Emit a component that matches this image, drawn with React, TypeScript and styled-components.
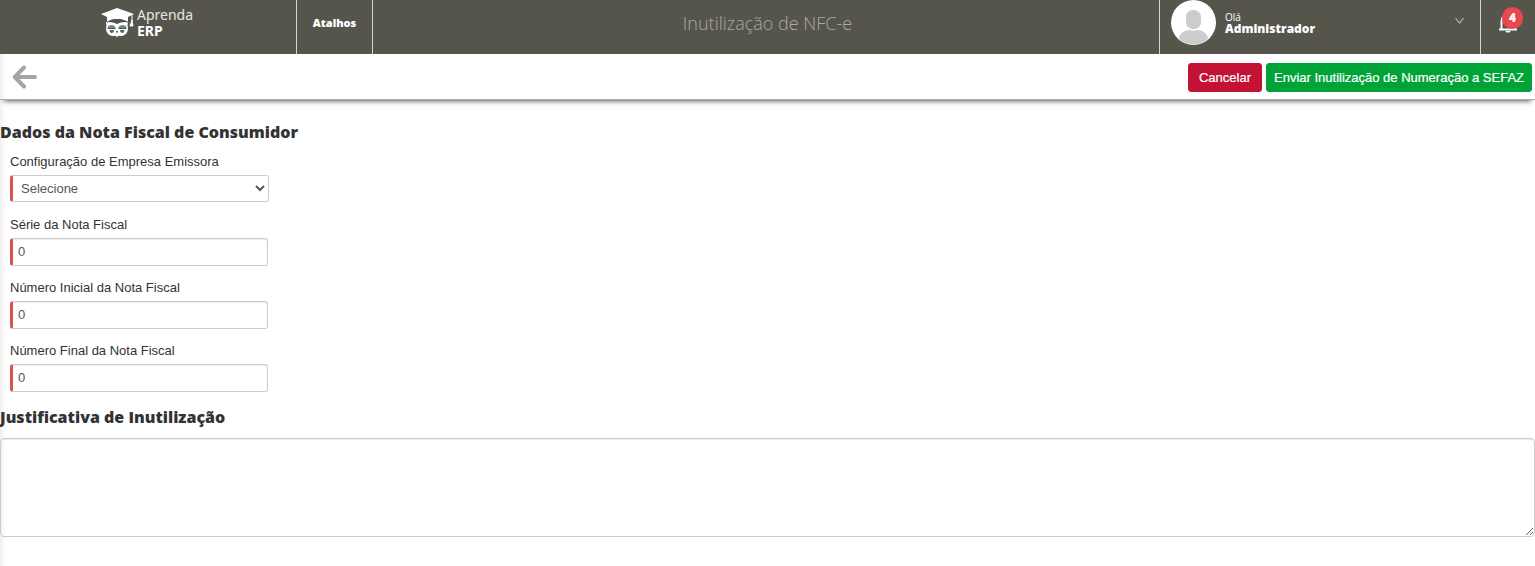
import React from "react";
import styled, { createGlobalStyle } from "styled-components";

const sans = `"Liberation Sans", Arial, sans-serif`;
const display = `"Open Sans", "Noto Sans", sans-serif`;

const GlobalStyle = createGlobalStyle`
  *, *::before, *::after { box-sizing: border-box; }
  body {
    margin: 0;
    background: #fff;
    color: #333;
    font-family: ${sans};
    font-size: 13px;
    line-height: 18px;
  }
`;

const Header = styled.header`
  display: flex;
  height: 54px;
  background: #56554c;
  color: #fff;
  font-family: ${display};
`;

const Brand = styled.a`
  display: flex;
  flex: 0 0 297px;
  gap: 2px;
  padding: 7px 0 0 101px;
  border-right: 1px solid #d5d5d0;
  color: #fff;
  text-decoration: none;
`;

const BrandName = styled.span`
  display: flex;
  flex-direction: column;
  font-family: "Noto Sans", sans-serif;
  font-size: 14px;
  line-height: 16px;
  color: #e6e6e2;

  strong {
    color: #fff;
  }
`;

const Shortcuts = styled.button`
  flex: 0 0 76px;
  padding: 0 0 10px;
  border: 0;
  border-right: 1px solid #d5d5d0;
  background: transparent;
  color: #fff;
  font-family: ${display};
  font-size: 11px;
  font-weight: 800;
`;

const PageTitle = styled.h1`
  flex: 1;
  margin: 0;
  padding: 11px 0 0 3px;
  color: #aaa9a3;
  font-size: 18px;
  font-weight: 300;
  line-height: 24px;
  text-align: center;
`;

const UserMenu = styled.button`
  display: flex;
  flex: 0 0 321px;
  align-items: flex-start;
  gap: 9px;
  padding: 0 15px 0 11px;
  border: 0;
  border-left: 1px solid #d5d5d0;
  background: transparent;
  color: #fff;
  font-family: ${display};
  font-size: 10px;
  line-height: 11px;
  text-align: left;
`;

const UserName = styled.span`
  display: flex;
  flex: 1;
  flex-direction: column;
  padding-top: 12px;

  strong {
    font-size: 12px;
    font-weight: 800;
  }
`;

const Chevron = styled.svg`
  margin-top: 16px;
`;

const Notifications = styled.button`
  position: relative;
  display: flex;
  flex: 0 0 55px;
  align-items: flex-start;
  padding: 12px 0 0 17px;
  border: 0;
  border-left: 1px solid #d5d5d0;
  background: transparent;
  color: #fff;
`;

const Badge = styled.span`
  position: absolute;
  top: 7px;
  right: 12px;
  width: 21px;
  height: 22px;
  border-radius: 11px;
  background: #e9484d;
  font-family: ${display};
  font-size: 12px;
  font-weight: 800;
  line-height: 22px;
  text-align: center;
`;

const Page = styled.main`
  min-height: calc(100vh - 54px);
  background: linear-gradient(to right, #f1f1f1, #fff 6px);
`;

const Toolbar = styled.div`
  display: flex;
  align-items: center;
  gap: 4px;
  height: 46px;
  padding: 1px 3px 0 12px;
  border-bottom: 1px solid #aaa;
  box-shadow: 0 5px 5px -4px #555;
`;

const BackButton = styled.button`
  margin-right: auto;
  padding: 0;
  border: 0;
  background: transparent;

  svg {
    display: block;
  }
`;

const ActionButton = styled.button<{ $color: string }>`
  min-width: 74px;
  height: 29px;
  padding: 0 7px;
  border: 1px solid ${({ $color }) => $color};
  border-radius: 3px;
  background: ${({ $color }) => $color};
  color: #fff;
  font-family: ${sans};
  font-size: 13px;
  -webkit-text-stroke: 0.2px #fff;
`;

const SectionTitle = styled.h2`
  margin: 0;
  color: #333;
  font-family: ${display};
  font-size: 16px;
  font-weight: 800;
  line-height: 22px;
`;

const Form = styled.form`
  padding-top: 21px;
`;

const Fields = styled.div`
  display: flex;
  flex-direction: column;
  gap: 13px;
  padding: 10px 10px 14px;
`;

const Field = styled.div`
  display: flex;
  flex-direction: column;
  align-items: flex-start;
  gap: 5px;
`;

const Label = styled.label`
  font-size: 13px;
  line-height: 17px;
`;

const Input = styled.input`
  width: 258px;
  height: 28px;
  padding: 0 5px 2px;
  border: 1px solid #ccc;
  border-left: 3px solid #d9534f;
  border-radius: 3px;
  background: #fff;
  box-shadow: inset 0 1px 1px rgba(0, 0, 0, 0.08);
  color: #555;
  font-family: ${sans};
  font-size: 13px;
`;

const Select = styled.select`
  width: 259px;
  height: 27px;
  margin-bottom: 1px;
  padding: 0 0 0 4px;
  border: 1px solid #ccc;
  border-left: 3px solid #d9534f;
  border-radius: 3px;
  background: #fff;
  color: #555;
  font-family: ${sans};
  font-size: 13px;
`;

const TextArea = styled.textarea`
  display: block;
  width: 100%;
  height: 99px;
  margin-top: 10px;
  padding: 6px 8px;
  border: 1px solid #ccc;
  border-radius: 4px;
  background: transparent;
  box-shadow: inset 0 1px 1px rgba(0, 0, 0, 0.08);
  color: #555;
  font-family: ${sans};
  font-size: 13px;
`;

const numberFields = [
  { id: "serie", label: "Série da Nota Fiscal" },
  { id: "numero-inicial", label: "Número Inicial da Nota Fiscal" },
  { id: "numero-final", label: "Número Final da Nota Fiscal" },
];

function OwlLogo() {
  return (
    <svg width="34" height="31" viewBox="0 0 34 31" aria-hidden="true">
      <path
        d="M5 15c3 0 7 0 11 2 4-2 8-2 11-2 0 2-1 3 0 6 0 4-2 7-6 8-2 0-3-1-5 1-2-2-3-1-5-1-4-1-6-4-6-8 1-3 0-4 0-6z"
        fill="#fff"
      />
      <path d="M6.500 21c0-4 8-4 8 0zM17.500 21c0-4 8-4 8 0z" fill="#75878a" />
      <path d="M6.500 21.500h8M17.500 21.500h8" stroke="#45534f" strokeWidth="1" />
      <path d="M8.500 23c0 4 4.500 4 4.500 0zM19 23c0 4 4.500 4 4.500 0z" fill="#56655f" />
      <path d="M15 24h2l-1 3z" fill="#56554c" />
      <path d="M0 7 16 1l17 6-6 3v5c-6-4-16-4-21 0v-5z" fill="#fff" />
      <path d="M6 15.500c5-4 15-4 21 0" fill="none" stroke="#56554c" strokeWidth="1" />
      <path d="M31 7v7M31 13l-2 6h3z" fill="#fff" stroke="#fff" strokeWidth="1" />
    </svg>
  );
}

function Avatar() {
  return (
    <svg width="45" height="45" viewBox="0 0 45 45" aria-hidden="true">
      <defs>
        <clipPath id="avatar-disc">
          <circle cx="22.500" cy="22.500" r="22" />
        </clipPath>
      </defs>
      <circle cx="22.500" cy="22.500" r="22.500" fill="#fff" />
      <g clipPath="url(#avatar-disc)" fill="#ccc">
        <rect x="15" y="10" width="15" height="19" rx="7" />
        <path d="M8 45v-6c0-5 5-9 11-9 2 1 5 1 7 0 6 0 11 4 11 9v6z" />
      </g>
    </svg>
  );
}

export default function App() {
  return (
    <>
      <GlobalStyle />
      <Header>
        <Brand href="#">
          <OwlLogo />
          <BrandName>
            <span>Aprenda</span>
            <strong>ERP</strong>
          </BrandName>
        </Brand>
        <Shortcuts type="button">Atalhos</Shortcuts>
        <PageTitle>Inutilização de NFC-e</PageTitle>
        <UserMenu type="button">
          <Avatar />
          <UserName>
            <span>Olá</span>
            <strong>Administrador</strong>
          </UserName>
          <Chevron width="11" height="10" viewBox="0 0 11 10" aria-hidden="true">
            <path d="m1.500 2 4 5 4-5" fill="none" stroke="#b5b5b0" strokeWidth="1.200" />
          </Chevron>
        </UserMenu>
        <Notifications type="button" aria-label="Notificações">
          <svg width="20" height="22" viewBox="0 0 20 22" aria-hidden="true">
            <path
              d="M1 17.500h18M3.500 17V9c0-4 3-6 6.500-6s6.500 2 6.500 6v8"
              fill="none"
              stroke="currentColor"
              strokeWidth="2"
            />
            <path d="M7.500 19h5c0 2-5 2-5 0" fill="currentColor" />
          </svg>
          <Badge>4</Badge>
        </Notifications>
      </Header>
      <Page>
        <Toolbar>
          <BackButton type="button" aria-label="Voltar">
            <svg width="25" height="24" viewBox="0 0 25 24" aria-hidden="true">
              <path
                d="M12 2.500 2.800 12l9.200 9.500M3 12h20"
                fill="none"
                stroke="#a5a5a5"
                strokeWidth="4"
                strokeLinecap="round"
                strokeLinejoin="round"
              />
            </svg>
          </BackButton>
          <ActionButton type="button" $color="#c41236">Cancelar</ActionButton>
          <ActionButton type="submit" form="inutilizacao" $color="#00a338">
            Enviar Inutilização de Numeração a SEFAZ
          </ActionButton>
        </Toolbar>
        <Form id="inutilizacao">
          <SectionTitle>Dados da Nota Fiscal de Consumidor</SectionTitle>
          <Fields>
            <Field>
              <Label htmlFor="empresa">Configuração de Empresa Emissora</Label>
              <Select id="empresa">
                <option>Selecione</option>
              </Select>
            </Field>
            {numberFields.map(({ id, label }) => (
              <Field key={id}>
                <Label htmlFor={id}>{label}</Label>
                <Input id={id} type="text" inputMode="numeric" defaultValue="0" />
              </Field>
            ))}
          </Fields>
          <SectionTitle as="label" htmlFor="justificativa">
            Justificativa de Inutilização
          </SectionTitle>
          <TextArea id="justificativa" />
        </Form>
      </Page>
    </>
  );
}
